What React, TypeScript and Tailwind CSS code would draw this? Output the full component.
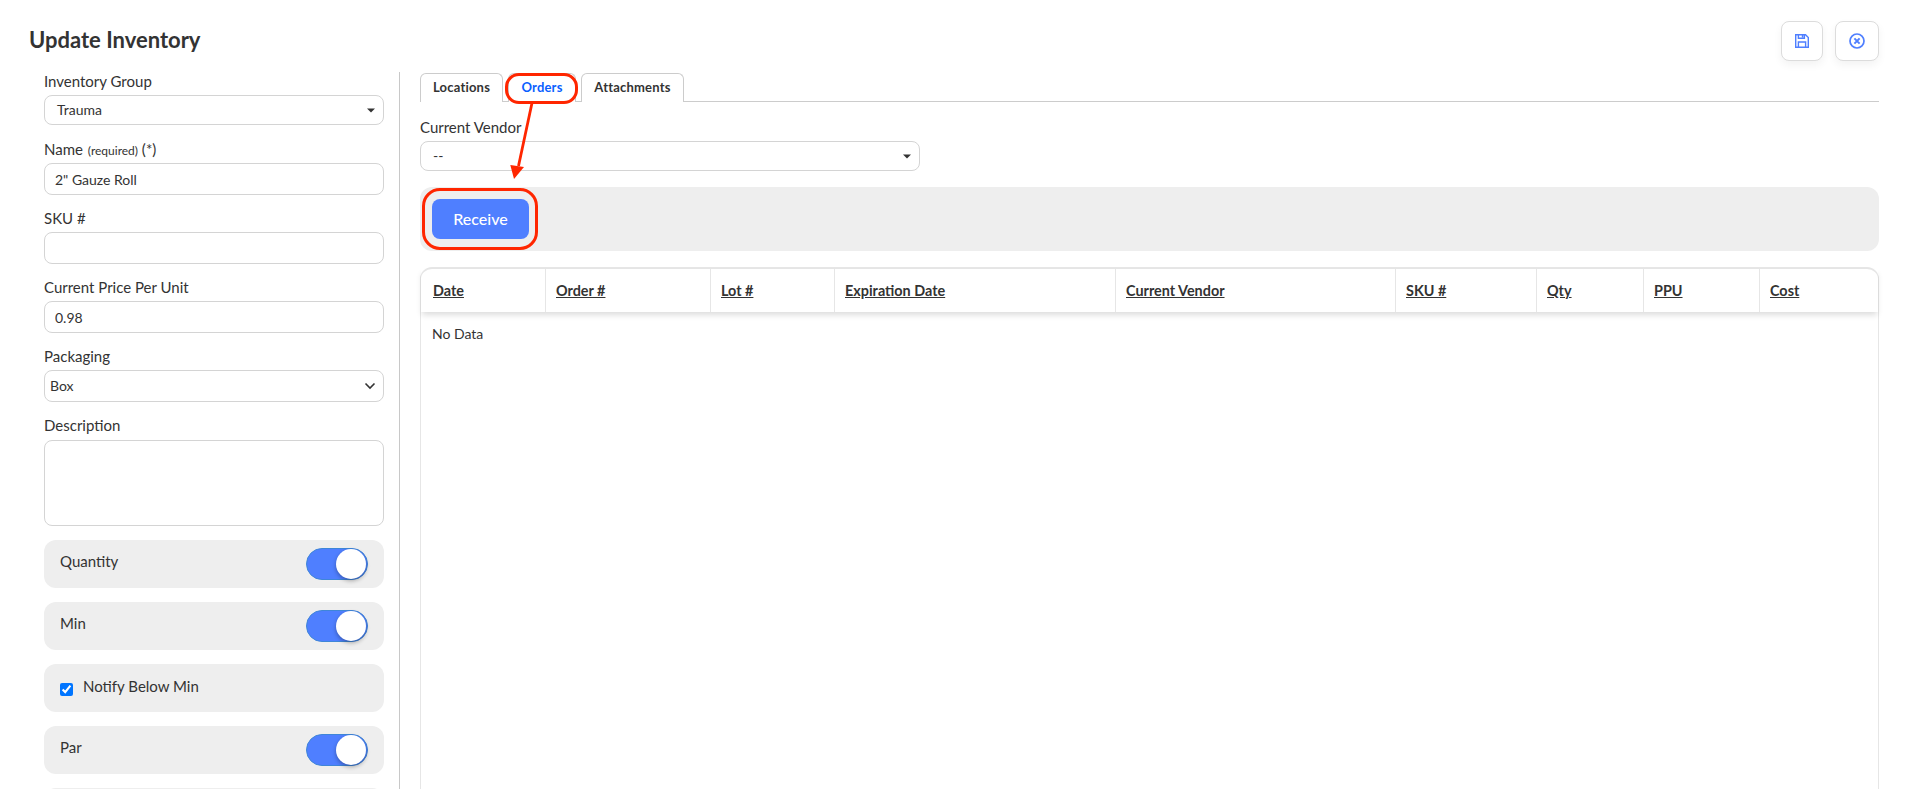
import React from 'react';

const Caret = () => (
  <svg width="8" height="5" viewBox="0 0 8 5" className="shrink-0">
    <path d="M0 0.5h8L4 4.5z" fill="#333" />
  </svg>
);

const Chevron = () => (
  <svg width="12" height="8" viewBox="0 0 12 8" className="shrink-0">
    <path d="M1.5 1.5 6 6l4.5-4.5" fill="none" stroke="#333" strokeWidth="1.6" />
  </svg>
);

const SaveIcon = () => (
  <svg width="14" height="14" viewBox="0 0 14 14" fill="none" stroke="#4f7fff" strokeWidth="1.4">
    <path d="M.7.7h9.8l2.8 2.8v9.8H.7z" />
    <path d="M3.4.7v3.6h6V.7" />
    <path d="M3.4 13.3V8h7.2v5.3" />
    <path d="M6.8 1v2.6h1.6V1z" fill="#4f7fff" stroke="none" />
  </svg>
);

const CloseIcon = () => (
  <svg width="16" height="16" viewBox="0 0 16 16" fill="none" stroke="#4f7fff">
    <circle cx="8" cy="8" r="7" strokeWidth="1.7" />
    <path d="M5.4 5.4l5.2 5.2M10.6 5.4l-5.2 5.2" strokeWidth="2" />
  </svg>
);

const Toggle = () => (
  <div className="flex h-8 w-[62px] items-center justify-end rounded-full border border-[#3f86d8] bg-[#4f7fff] pr-px">
    <div className="h-[30px] w-[30px] rounded-full bg-white shadow-[0_2px_4px_rgba(0,0,0,0.3)]" />
  </div>
);

const ToggleRow = ({ label }: { label: string }) => (
  <div className="mb-[14px] flex h-12 items-center justify-between rounded-xl bg-[#eeeeee] pl-4 pr-4">
    <span className="mb-[6px]">{label}</span>
    <Toggle />
  </div>
);

const inputClass = 'block rounded-lg border border-[#d4d4d4] bg-white text-[#333] outline-none';

const columns = [
  { label: 'Date', width: 'w-[124px]' },
  { label: 'Order #', width: 'w-[165px]' },
  { label: 'Lot #', width: 'w-[124px]' },
  { label: 'Expiration Date', width: 'w-[281px]' },
  { label: 'Current Vendor', width: 'w-[280px]' },
  { label: 'SKU #', width: 'w-[141px]' },
  { label: 'Qty', width: 'w-[107px]' },
  { label: 'PPU', width: 'w-[116px]' },
  { label: 'Cost', width: 'w-[119px]' },
];

export default function App() {
  return (
    <div className="relative h-[789px] w-[1913px] overflow-hidden bg-white text-[15px] leading-5 text-[#333] [font-family:Lato,'Liberation_Sans',sans-serif]">
      {/* header */}
      <div className="flex h-[72px] items-start justify-between pl-[29px] pr-[34px] pt-[21px]">
        <h1 className="mt-[5px] text-[22px] font-bold leading-[27px]">Update Inventory</h1>
        <div className="flex gap-3">
          <button className="flex h-10 w-[42px] items-center justify-center rounded-lg border border-[#dcdcdc] bg-white shadow-[0_4px_8px_rgba(0,0,0,0.05)]">
            <SaveIcon />
          </button>
          <button className="flex h-10 w-11 items-center justify-center rounded-lg border border-[#dcdcdc] bg-white shadow-[0_4px_8px_rgba(0,0,0,0.05)]">
            <CloseIcon />
          </button>
        </div>
      </div>

      <div className="flex h-[717px]">
        {/* left form */}
        <div className="h-full w-[400px] shrink-0 border-r border-[#c8c8c8] pl-11 pr-[15px]">
          <label className="-mt-px mb-1 block h-5">Inventory Group</label>
          <div className={`${inputClass} flex h-[30px] w-full items-center justify-between pl-3 pr-2 text-sm`}>
            <span>Trauma</span>
            <Caret />
          </div>

          <label className="mb-1 mt-[14px] block h-5">
            Name <span className="ml-px text-xs">(required)</span> (*)
          </label>
          <input readOnly value={'2" Gauze Roll'} className={`${inputClass} h-8 w-full px-[10px] text-sm`} />

          <label className="mb-1 mt-[13px] block h-5">SKU #</label>
          <input readOnly value="" className={`${inputClass} h-8 w-full px-[10px] text-sm`} />

          <label className="mb-1 mt-[13px] block h-5">Current Price Per Unit</label>
          <input readOnly value="0.98" className={`${inputClass} h-8 w-full px-[10px] text-sm`} />

          <label className="mb-1 mt-[13px] block h-5">Packaging</label>
          <div className={`${inputClass} flex h-8 w-full items-center justify-between pl-[5px] pr-[7px] text-sm`}>
            <span>Box</span>
            <Chevron />
          </div>

          <label className="mb-[5px] mt-[13px] block h-5">Description</label>
          <textarea readOnly className={`${inputClass} mb-[14px] h-[86px] w-full resize-none`} />

          <ToggleRow label="Quantity" />
          <ToggleRow label="Min" />
          <div className="mb-[14px] flex h-12 items-center rounded-xl bg-[#eeeeee] pl-4">
            <input type="checkbox" defaultChecked readOnly className="mr-[10px] mt-[2px] h-[13px] w-[13px]" />
            <span className="mb-1">Notify Below Min</span>
          </div>
          <ToggleRow label="Par" />
          <div className="h-12 rounded-xl bg-[#eeeeee]" />
        </div>

        {/* right panel */}
        <div className="min-w-0 flex-1 pl-5 pr-[34px] pt-px">
          <div className="flex h-[29px] gap-[5px] border-b border-[#cccccc] text-[13px] font-bold leading-[27px] tracking-[0.2px]">
            <div className="h-[29px] w-[83px] rounded-t-md border border-b-0 border-[#cccccc] bg-white text-center">Locations</div>
            <div className="h-[29px] w-[68px] rounded-t-md border border-b-0 border-[#cccccc] bg-white text-center text-[#0a5fff]">Orders</div>
            <div className="h-[29px] w-[103px] rounded-t-md border border-b-0 border-[#cccccc] bg-white text-center">Attachments</div>
          </div>

          <label className="mb-1 mt-[15px] block h-5">Current Vendor</label>
          <div className={`${inputClass} flex h-[30px] w-[500px] items-center justify-between pl-3 pr-2 text-sm`}>
            <span>--</span>
            <Caret />
          </div>

          <div className="mt-4 flex h-16 items-center rounded-xl bg-[#eeeeee] pl-3">
            <button className="h-10 w-[97px] rounded-lg bg-[#4f7fff] text-base font-medium text-white">Receive</button>
          </div>

          <div className="mt-4 h-[600px] rounded-t-xl border border-t-2 border-[#e6e6e6]">
            <table className="w-full table-fixed border-separate border-spacing-0">
              <thead>
                <tr className="h-[43px] shadow-[0_4px_6px_-1px_rgba(0,0,0,0.14)]">
                  {columns.map((col, i) => (
                    <th
                      key={col.label}
                      className={`${col.width} ${i > 0 ? 'border-l border-[#e6e6e6] pl-[10px]' : 'pl-3'} text-left text-[14.4px] font-bold`}
                    >
                      <span className="underline">{col.label}</span>
                    </th>
                  ))}
                </tr>
              </thead>
              <tbody>
                <tr>
                  <td colSpan={9} className="pl-[11px] pt-3 text-sm">No Data</td>
                </tr>
              </tbody>
            </table>
          </div>
        </div>
      </div>

      {/* annotation marks */}
      <div className="pointer-events-none absolute left-[505px] top-[73px] h-[31px] w-[73px] rounded-[14px] border-[3px] border-[#ff2600]" />
      <div className="pointer-events-none absolute left-[422px] top-[188px] h-[62px] w-[116px] rounded-[18px] border-[3px] border-[#ff2600]" />
      <svg className="pointer-events-none absolute left-[500px] top-[100px]" width="50" height="85" viewBox="0 0 50 85">
        <path d="M32 3 18.5 66" stroke="#ff2600" strokeWidth="2.8" fill="none" />
        <path d="M14 79 10.3 65 24 67z" fill="#ff2600" />
      </svg>
    </div>
  );
}
